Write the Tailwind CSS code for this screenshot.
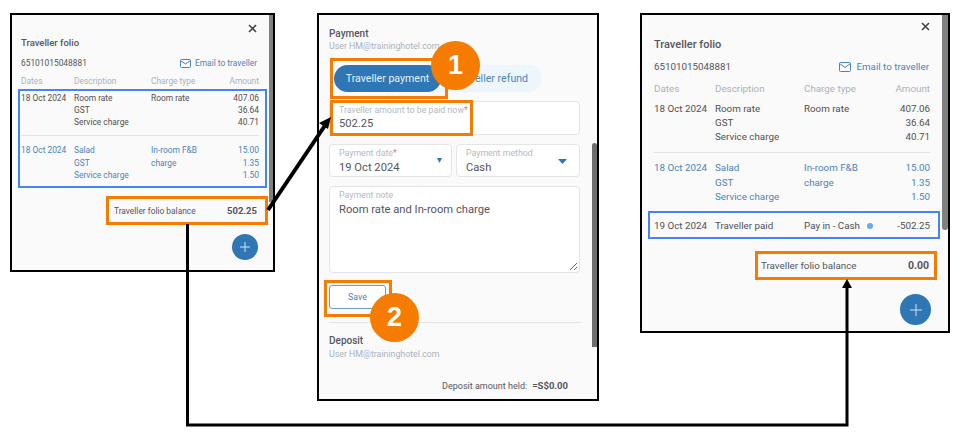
<!DOCTYPE html>
<html><head><meta charset="utf-8"><script src="https://cdn.jsdelivr.net/npm/@tailwindcss/browser@4"></script></head>
<body class="bg-white">
<div class="relative w-[960px] h-[441px] overflow-hidden bg-white font-['Roboto',sans-serif] text-[#55555f]">

<!-- Panel 1 -->
<section class="absolute left-[10px] top-[13px] w-[265px] h-[259px] border-2 border-black bg-[#fafafa] pl-[9px] pr-[10px] pt-[7px] text-[8.4px] leading-[12px]">
  <div class="absolute right-0 top-0 w-[4px] h-[187px] bg-[#808080]"></div>
  <div class="flex justify-end h-[13px] pr-[6px]"><svg width="9" height="9" viewBox="0 0 9 9" class="mt-[2px]"><path d="M1 1l7 7M8 1l-7 7" stroke="#444" stroke-width="1.6"/></svg></div>
  <h2 class="mt-[1px] h-[14px] text-[9.5px] font-medium leading-[14px]">Traveller folio</h2>
  <div class="mt-[6px] flex items-center justify-between h-[14px] pr-[6px]"><span>65101015048881</span><span class="flex items-center gap-[4px] text-[#4a84bb]"><svg width="11" height="9" viewBox="0 0 11 9" fill="none" stroke="#4a84bb"><rect x=".5" y=".5" width="10" height="8" rx="1"/><path d="M.5 1.500l5 3.500 5-3.500"/></svg>Email to traveller</span></div>
  <div class="mt-[5px] grid grid-cols-[53px_77px_1fr_auto] h-[13px] text-[#aab2bc] pr-[4px]"><span>Dates</span><span>Description</span><span>Charge type</span><span>Amount</span></div>
  <div class="mt-[4px] grid grid-cols-[53px_77px_1fr_auto] pr-[4px] text-[#505050]"><span>18 Oct 2024</span><span>Room rate<br>GST<br>Service charge</span><span>Room rate</span><span class="text-right">407.06<br>36.64<br>40.71</span></div>
  <div class="mt-[7px] mr-[4px] h-px bg-[#e4e4e4]"></div>
  <div class="mt-[8px] grid grid-cols-[53px_77px_1fr_auto] pr-[4px] text-[#4a84bb] leading-[12.500px]"><span>18 Oct 2024</span><span>Salad<br>GST<br>Service charge</span><span>In-room F&amp;B<br>charge</span><span class="text-right">15.00<br>1.35<br>1.50</span></div>
  <div class="mt-[5px] -ml-[1px] mr-[4px] h-px bg-[#e4e4e4]"></div>
  <div class="mt-[17px] ml-[93px] flex justify-between h-[12px] pr-[6px]"><span>Traveller folio balance</span><span class="text-[9.500px] font-bold">502.25</span></div>
  <div class="absolute left-[220px] top-[219px] w-[26px] h-[26px] rounded-full bg-[#2f76b5] flex items-center justify-center"><svg width="10" height="10" viewBox="0 0 10 10"><path d="M5 0v10M0 5h10" stroke="#cfe6f7"/></svg></div>
</section>

<!-- Panel 2 -->
<section class="absolute left-[317px] top-[13px] w-[282px] h-[388px] border-2 border-black bg-[#fafafa] pl-[10px] pt-[12px] text-[8.8px] leading-[13px]">
  <div class="absolute right-0 top-[128px] w-[5px] h-[204px] rounded-t bg-[#6e6e6e]"></div>
  <h2 class="text-[10px] font-medium h-[13px]">Payment</h2>
  <p class="text-[#aab2bc] h-[13px]">User HM@traininghotel.com</p>
  <div class="mt-[12px] flex w-[208px] h-[27px] ml-[5px] rounded-full bg-[#eef6fd] text-[10.600px] leading-[27px]">
    <span class="w-[107px] text-center rounded-full bg-[#2f76b5] text-[#e6f2fb]">Traveller payment</span>
    <span class="flex-1 text-center text-[#4a84bb]">Traveller refund</span>
  </div>
  <div class="mt-[9px] w-[251px] h-[34px] rounded border border-[#e5e5e5] bg-white pl-[9px] pt-[3px]"><p class="text-[#b5b9bf] leading-[11px]">Traveller amount to be paid now<span class="text-[#e57373]">*</span></p><p class="text-[11.200px] leading-[15px]">502.25</p></div>
  <div class="mt-[9px] flex gap-[4px] w-[251px]">
    <div class="relative w-[123px] h-[33px] rounded border border-[#e5e5e5] bg-white pl-[9px] pt-[3px]"><p class="text-[#b5b9bf] leading-[11px]">Payment date<span class="text-[#e57373]">*</span></p><p class="text-[11.200px] leading-[17px]">19 Oct 2024</p><svg class="absolute right-[9px] top-[13px]" width="5" height="5" viewBox="0 0 5 5"><path d="M0 0h5L2.500 5z" fill="#2f76b5"/></svg></div>
    <div class="relative flex-1 h-[33px] rounded border border-[#e5e5e5] bg-white pl-[9px] pt-[3px]"><p class="text-[#b5b9bf] leading-[11px]">Payment method</p><p class="text-[11.200px] leading-[17px]">Cash</p><svg class="absolute right-[12px] top-[14px]" width="9" height="5" viewBox="0 0 9 5"><path d="M0 0h9L4.500 5z" fill="#2f76b5"/></svg></div>
  </div>
  <div class="relative mt-[9px] w-[251px] h-[87px] rounded border border-[#e5e5e5] bg-white pl-[9px] pt-[3px]"><p class="text-[#b5b9bf] leading-[11px]">Payment note</p><p class="text-[11.200px] leading-[17px]">Room rate and In-room charge</p><svg class="absolute right-[1px] bottom-[1px]" width="9" height="9" viewBox="0 0 9 9"><path d="M1 8l7-7M5 8l3-3" stroke="#666"/></svg></div>
  <button class="mt-[12px] block w-[57px] h-[24px] rounded-[3px] border border-[#6f9cc8] bg-white text-center text-[#4a84bb]">Save</button>
  <div class="mt-[13px] mr-[16px] h-px bg-[#e4e4e4]"></div>
  <h2 class="mt-[11px] text-[10px] font-medium h-[14px]">Deposit</h2>
  <p class="text-[#aab2bc] h-[13px]">User HM@traininghotel.com</p>
  <p class="mt-[18px] pr-[29px] flex items-baseline justify-end gap-[5px] text-[9px]">Deposit amount held: <b class="text-[9.500px] font-bold">=S$0.00</b></p>
</section>

<!-- Panel 3 -->
<section class="absolute left-[640px] top-[13px] w-[310px] h-[320px] border-2 border-black bg-[#fafafa] pl-[12px] pr-[18px] pt-[5px] text-[9.800px] leading-[14px]">
  <div class="absolute right-0 top-0 w-[6px] h-[215px] rounded-b bg-[#808080]"></div>
  <div class="flex justify-end h-[13px]"><svg width="9" height="9" viewBox="0 0 9 9" class="mt-[2px]"><path d="M1 1l7 7M8 1l-7 7" stroke="#444" stroke-width="1.6"/></svg></div>
  <h2 class="mt-[4px] h-[16px] text-[11px] font-medium leading-[16px]">Traveller folio</h2>
  <div class="mt-[7px] flex items-center justify-between h-[14px] pr-[1px]"><span>65101015048881</span><span class="flex items-center gap-[5px] text-[#4a84bb]"><svg width="12" height="10" viewBox="0 0 12 10" fill="none" stroke="#4a84bb"><rect x=".5" y=".5" width="11" height="9" rx="1"/><path d="M.5 1.500l5.500 4 5.500-4"/></svg>Email to traveller</span></div>
  <div class="mt-[8px] grid grid-cols-[61px_89px_1fr_auto] h-[14px] text-[#aab2bc]"><span>Dates</span><span>Description</span><span>Charge type</span><span>Amount</span></div>
  <div class="mt-[6px] grid grid-cols-[61px_89px_1fr_auto] text-[#505050]"><span>18 Oct 2024</span><span>Room rate<br>GST<br>Service charge</span><span>Room rate</span><span class="text-right">407.06<br>36.64<br>40.71</span></div>
  <div class="mt-[8px] h-px bg-[#e4e4e4]"></div>
  <div class="mt-[8px] grid grid-cols-[61px_89px_1fr_auto] text-[#4a84bb] leading-[14.500px]"><span>18 Oct 2024</span><span>Salad<br>GST<br>Service charge</span><span>In-room F&amp;B<br>charge</span><span class="text-right">15.00<br>1.35<br>1.50</span></div>
  <div class="mt-[7px] h-px -ml-[5px] bg-[#e4e4e4]"></div>
  <div class="mt-[6px] grid grid-cols-[61px_89px_1fr_auto] text-[#505050]"><span>19 Oct 2024</span><span>Traveller paid</span><span class="flex items-center gap-[7px]">Pay in - Cash<i class="w-[6px] h-[6px] rounded-full bg-[#6aa9ee]"></i></span><span>-502.25</span></div>
  <div class="mt-[26px] ml-[107px] flex justify-between h-[14px] pr-[1px]"><span>Traveller folio balance</span><span class="text-[10.500px] font-bold">0.00</span></div>
  <div class="absolute left-[258px] top-[279px] w-[31px] h-[31px] rounded-full bg-[#2f76b5] flex items-center justify-center"><svg width="12" height="12" viewBox="0 0 12 12"><path d="M6 0v12M0 6h12" stroke="#cfe6f7"/></svg></div>
</section>

<!-- Annotations -->
<div class="absolute left-[18px] top-[89px] w-[249px] h-[99px] border-2 border-[#4285f4]"></div>
<div class="absolute left-[648px] top-[211px] w-[292px] h-[28px] border-2 border-[#4285f4]"></div>
<div class="absolute left-[106px] top-[196px] w-[162px] h-[29px] border-[3px] border-[#f57c00]"></div>
<div class="absolute left-[755px] top-[251px] w-[182px] h-[29px] border-[3px] border-[#f57c00]"></div>
<div class="absolute left-[330px] top-[58px] w-[118px] h-[41px] border-[3px] border-[#f57c00]"></div>
<div class="absolute left-[330px] top-[100px] w-[143px] h-[36px] border-[3px] border-[#f57c00]"></div>
<div class="absolute left-[324px] top-[280px] w-[68px] h-[37px] border-[3px] border-[#f57c00]"></div>
<svg class="absolute left-0 top-0" width="960" height="441" viewBox="0 0 960 441" fill="none">
  <path d="M268 210L326 124" stroke="#000" stroke-width="4"/>
  <path d="M331 117l-12 6 9 6z" fill="#000"/>
  <path d="M187.500 224V425H847V286" stroke="#000" stroke-width="3"/>
  <path d="M847 279l-5 9h10z" fill="#000"/>
</svg>
<div class="absolute left-[431px] top-[41px] w-[49px] h-[49px] rounded-full bg-[#f57c00] flex items-center justify-center text-white text-[27px] font-bold font-['Liberation_Sans',sans-serif]">1</div>
<div class="absolute left-[370px] top-[293px] w-[49px] h-[49px] rounded-full bg-[#f57c00] flex items-center justify-center text-white text-[27px] font-bold font-['Liberation_Sans',sans-serif]">2</div>
</div>
</body></html>
